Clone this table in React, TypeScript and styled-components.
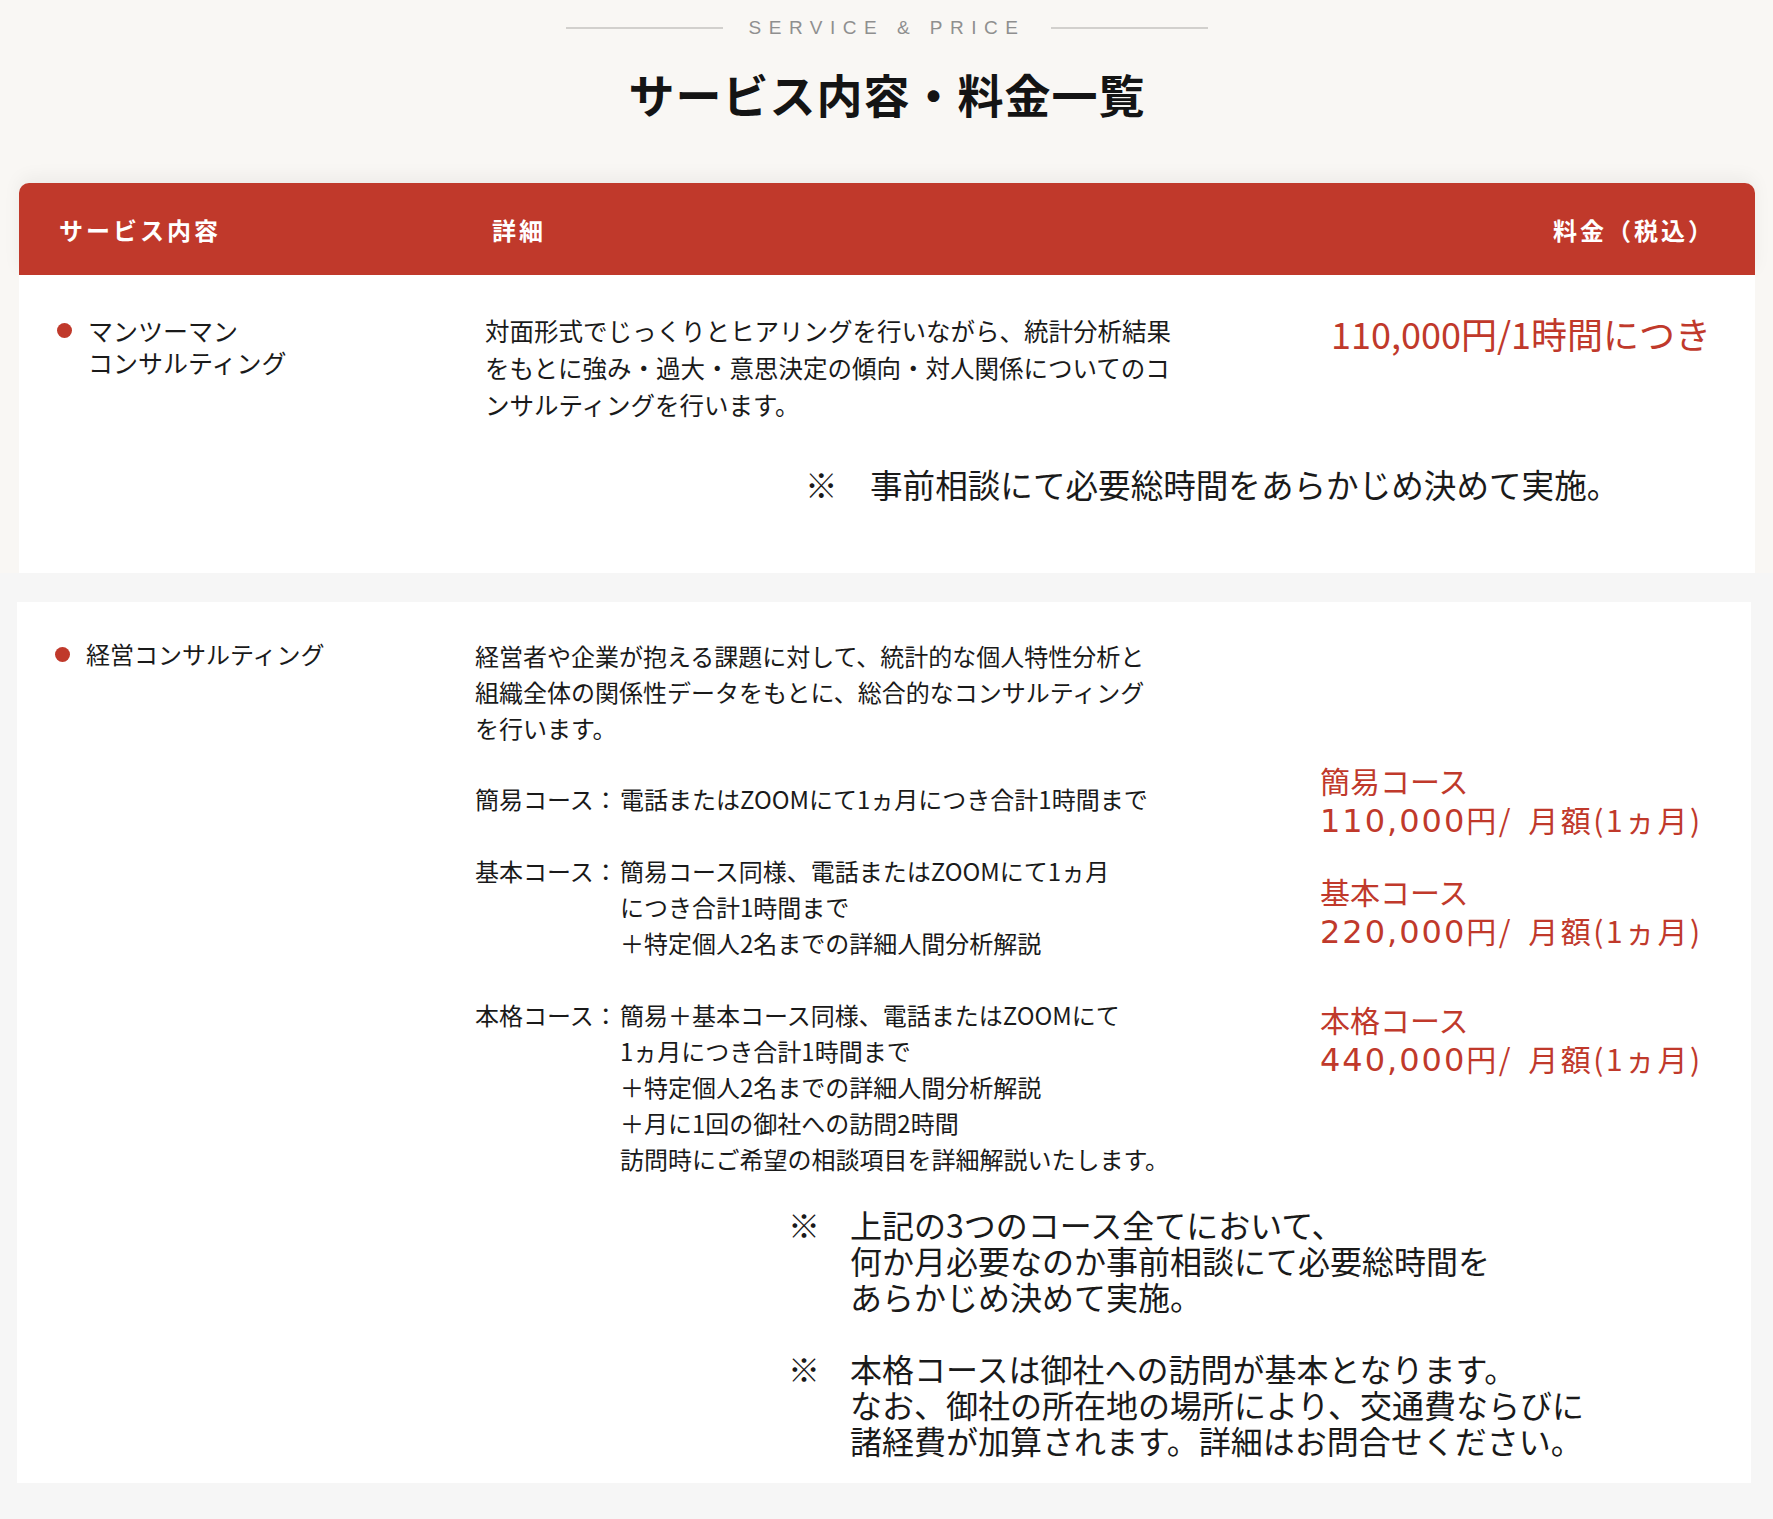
import React from "react";
import styled, { createGlobalStyle } from "styled-components";

const RED = "#c0392b";
const JP = `"Noto Sans CJK JP", "Noto Sans", sans-serif`;

const GlobalStyle = createGlobalStyle`
  html, body {
    margin: 0;
    padding: 0;
  }
  body {
    background: #f6f6f6;
    font-family: ${JP};
    color: #1a1a1a;
  }
`;

const Page = styled.div`
  width: 1773px;
`;

// 上半分（ベージュの背景）
const TopSection = styled.section`
  background: #f9f7f4;
  padding: 16px 18px 0 19px;
`;

const Eyebrow = styled.div`
  display: flex;
  align-items: center;
  justify-content: center;
  gap: 26px;
  height: 24px;

  &::before,
  &::after {
    content: "";
    width: 157px;
    height: 2px;
    background: #d2d0cd;
  }
`;

const EyebrowText = styled.span`
  font-family: "Liberation Sans", sans-serif;
  font-size: 19px;
  letter-spacing: 7.5px;
  color: #8f8f8f;
  line-height: 24px;
`;

const Title = styled.h2`
  margin: 25px 0 0;
  text-align: center;
  font-size: 46px;
  line-height: 56px;
  font-weight: 700;
  letter-spacing: 1px;
  color: #141414;
`;

const TableHead = styled.div`
  margin-top: 62px;
  height: 92px;
  display: flex;
  align-items: center;
  padding: 0 42px 0 40px;
  background: ${RED};
  border-radius: 10px 10px 0 0;
  box-shadow: 0 -6px 18px rgba(0, 0, 0, 0.05);
  color: #fff;
  font-size: 24px;
  font-weight: 700;
  letter-spacing: 3px;
`;

const HeadCell = styled.span<{ $width?: number }>`
  ${(p) => (p.$width ? `width: ${p.$width}px;` : "flex: 1;")}
`;

// 下半分（グレーの背景）
const BottomSection = styled.section`
  background: #f6f6f6;
  padding: 29px 22px 36px 17px;
`;

const Card = styled.div<{ $label: number; $desc: number; $pad: string }>`
  background: #fff;
  display: grid;
  grid-template-columns: ${(p) => p.$label}px ${(p) => p.$desc}px 1fr;
  align-items: start;
  padding: ${(p) => p.$pad};
`;

const Label = styled.div<{ $size: number; $offset?: number }>`
  display: flex;
  align-items: flex-start;
  gap: 16px;
  margin-top: ${(p) => p.$offset || 0}px;
  font-size: ${(p) => p.$size}px;
  line-height: 32px;
`;

const Dot = styled.span`
  flex: none;
  width: 15px;
  height: 15px;
  margin-top: 9px;
  border-radius: 50%;
  background: ${RED};
`;

const Desc = styled.p<{ $size: number; $lh: number }>`
  margin: 0;
  font-size: ${(p) => p.$size}px;
  line-height: ${(p) => p.$lh}px;
`;

const Price = styled.div`
  color: ${RED};
  font-size: 36px;
  line-height: 42px;
  white-space: nowrap;
`;

const Courses = styled.div`
  grid-column: 2;
  margin-top: 35px;
  display: flex;
  flex-direction: column;
  gap: 36px;
`;

const Course = styled.div`
  display: flex;
  font-size: 24px;
  line-height: 36px;
  white-space: nowrap;
`;

const CourseName = styled.span`
  flex: none;
  width: 145px;
`;

const Prices = styled.div`
  grid-column: 3;
  margin-top: 15px;
  display: flex;
  flex-direction: column;
`;

const PriceBlock = styled.div<{ $gap?: number }>`
  margin-top: ${(p) => p.$gap || 0}px;
  color: ${RED};
  font-size: 30px;
  line-height: 39px;
  white-space: nowrap;
`;

const PriceLine = styled.span`
  letter-spacing: 2.5px;
  word-spacing: 6px;
`;

const Amount = styled.span`
  font-family: "DejaVu Sans", ${JP};
  font-size: 32px;
  letter-spacing: 2px;
`;

const Notes = styled.div<{ $top: number; $indent: number; $size: number }>`
  grid-column: 2 / 4;
  margin: ${(p) => p.$top}px 0 0 ${(p) => p.$indent}px;
  display: flex;
  flex-direction: column;
  gap: 36px;
  font-size: ${(p) => p.$size}px;
`;

const Note = styled.div<{ $lh: number; $mark: number }>`
  display: flex;
  line-height: ${(p) => p.$lh}px;
  white-space: nowrap;

  & > span:first-child {
    flex: none;
    width: ${(p) => p.$mark}px;
  }
`;

const courses = [
  { name: "簡易コース：", lines: ["電話またはZOOMにて1ヵ月につき合計1時間まで"] },
  {
    name: "基本コース：",
    lines: ["簡易コース同様、電話またはZOOMにて1ヵ月", "につき合計1時間まで", "＋特定個人2名までの詳細人間分析解説"],
  },
  {
    name: "本格コース：",
    lines: [
      "簡易＋基本コース同様、電話またはZOOMにて",
      "1ヵ月につき合計1時間まで",
      "＋特定個人2名までの詳細人間分析解説",
      "＋月に1回の御社への訪問2時間",
      "訪問時にご希望の相談項目を詳細解説いたします。",
    ],
  },
];

const prices = [
  { name: "簡易コース", amount: "110,000", gap: 0 },
  { name: "基本コース", amount: "220,000", gap: 31 },
  { name: "本格コース", amount: "440,000", gap: 48 },
];

const withBreaks = (lines: string[]) =>
  lines.map((l, i) => (
    <React.Fragment key={i}>
      {i > 0 && <br />}
      {l}
    </React.Fragment>
  ));

const App: React.FC = () => {
  return (
    <Page>
      <GlobalStyle />
      <TopSection>
        <Eyebrow>
          <EyebrowText>SERVICE &amp; PRICE</EyebrowText>
        </Eyebrow>
        <Title>サービス内容・料金一覧</Title>
        <TableHead>
          <HeadCell $width={433}>サービス内容</HeadCell>
          <HeadCell>詳細</HeadCell>
          <HeadCell $width={160}>料金（税込）</HeadCell>
        </TableHead>

        <Card $label={428} $desc={846} $pad="37px 0 67px 38px">
          <Label $size={25} $offset={2}>
            <Dot />
            <span>
              マンツーマン
              <br />
              コンサルティング
            </span>
          </Label>
          <Desc $size={24.5} $lh={37}>
            {withBreaks([
              "対面形式でじっくりとヒアリングを行いながら、統計分析結果",
              "をもとに強み・過大・意思決定の傾向・対人関係についてのコ",
              "ンサルティングを行います。",
            ])}
          </Desc>
          <Price>110,000円/1時間につき</Price>
          <Notes $top={39} $indent={320} $size={32.6}>
            <Note $lh={44} $mark={65}>
              <span>※</span>
              <span>事前相談にて必要総時間をあらかじめ決めて実施。</span>
            </Note>
          </Notes>
        </Card>
      </TopSection>

      <BottomSection>
        <Card $label={420} $desc={845} $pad="36px 0 25px 38px">
          <Label $size={24}>
            <Dot />
            <span>経営コンサルティング</span>
          </Label>
          <Desc $size={24} $lh={36}>
            {withBreaks([
              "経営者や企業が抱える課題に対して、統計的な個人特性分析と",
              "組織全体の関係性データをもとに、総合的なコンサルティング",
              "を行います。",
            ])}
          </Desc>
          <div />

          <Courses>
            {courses.map((c) => (
              <Course key={c.name}>
                <CourseName>{c.name}</CourseName>
                <span>{withBreaks(c.lines)}</span>
              </Course>
            ))}
          </Courses>
          <Prices>
            {prices.map((p) => (
              <PriceBlock key={p.name} $gap={p.gap}>
                {p.name}
                <br />
                <PriceLine>
                  <Amount>{p.amount}</Amount>円/ 月額(1ヵ月)
                </PriceLine>
              </PriceBlock>
            ))}
          </Prices>

          <Notes $top={29} $indent={313} $size={32}>
            <Note $lh={36} $mark={62}>
              <span>※</span>
              <span>
                {withBreaks([
                  "上記の3つのコース全てにおいて、",
                  "何か月必要なのか事前相談にて必要総時間を",
                  "あらかじめ決めて実施。",
                ])}
              </span>
            </Note>
            <Note $lh={36} $mark={62}>
              <span>※</span>
              <span>
                {withBreaks([
                  "本格コースは御社への訪問が基本となります。",
                  "なお、御社の所在地の場所により、交通費ならびに",
                  "諸経費が加算されます。詳細はお問合せください。",
                ])}
              </span>
            </Note>
          </Notes>
        </Card>
      </BottomSection>
    </Page>
  );
};

export default App;
